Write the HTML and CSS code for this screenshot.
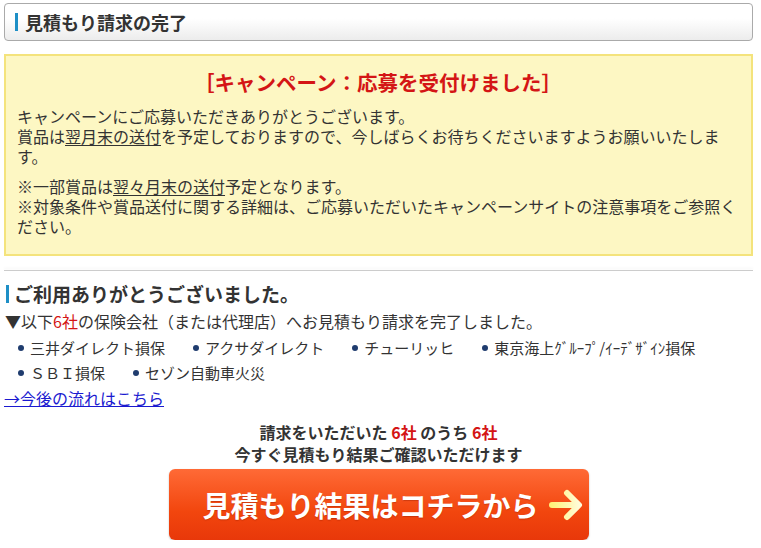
FILE: index.html
```html
<!DOCTYPE html>
<html lang="ja">
<head>
    <meta charset="UTF-8">
    <meta name="viewport" content="width=device-width, initial-scale=1.0">
    <title>見積もり請求の完了</title>
    <link rel="stylesheet" href="styles.css">
</head>
<body>
    <div class="wrap">
        <h1 class="page-title">見積もり請求の完了</h1>

        <div class="campaign">
            <h2 class="campaign-title">［キャンペーン：応募を受付けました］</h2>
            <p>キャンペーンにご応募いただきありがとうございます。<br>賞品は<u>翌月末の送付</u>を予定しておりますので、今しばらくお待ちくださいますようお願いいたします。</p>
            <p>※一部賞品は<u>翌々月末の送付</u>予定となります。<br>※対象条件や賞品送付に関する詳細は、ご応募いただいたキャンペーンサイトの注意事項をご参照ください。</p>
        </div>

        <div class="divider"></div>

        <h2 class="thanks">ご利用ありがとうございました。</h2>
        <p class="lead">▼以下<span class="red">6社</span>の保険会社（または代理店）へお見積もり請求を完了しました。</p>
        <ul class="companies">
            <li>三井ダイレクト損保</li>
            <li>アクサダイレクト</li>
            <li>チューリッヒ</li>
            <li>東京海上ｸﾞﾙｰﾌﾟ/ｲｰﾃﾞｻﾞｲﾝ損保</li>
            <li>ＳＢＩ損保</li>
            <li>セゾン自動車火災</li>
        </ul>
        <a class="flow-link" href="#">→今後の流れはこちら</a>

        <div class="result">
            <p class="result-note">請求をいただいた <span class="red">6社</span> のうち <span class="red">6社</span><br>今すぐ見積もり結果ご確認いただけます</p>
            <a class="result-btn" href="#">
                <span>見積もり結果はコチラから</span>
                <svg class="arrow" width="36" height="34" viewBox="0 0 36 34">
                    <defs>
                        <linearGradient id="ag" x1="0" y1="0" x2="1" y2="0">
                            <stop offset="0" stop-color="#fff27a"/>
                            <stop offset="1" stop-color="#fffbd8"/>
                        </linearGradient>
                    </defs>
                    <path d="M3 17 H29 M18 5 L30 17 L18 29" fill="none" stroke="url(#ag)" stroke-width="6" stroke-linecap="round" stroke-linejoin="round"/>
                </svg>
            </a>
        </div>
    </div>
</body>
</html>
```

FILE: styles.css
```css
body {
    margin: 0;
    font-family: "Noto Sans CJK JP", "Noto Sans", sans-serif;
    color: #333;
    background: #fff;
}
.wrap {
    padding: 3px 8px 0 4px;
}
.page-title {
    margin: 0;
    height: 36px;
    display: flex;
    align-items: center;
    padding-left: 10px;
    border: 1px solid #aaa;
    border-radius: 4px;
    background: linear-gradient(#ffffff 40%, #ececec);
    font-size: 18px;
    font-weight: bold;
    color: #333;
}
.page-title::before {
    content: "";
    width: 3px;
    height: 18px;
    background: #1e8fc6;
    margin-right: 7px;
}
.campaign {
    margin-top: 13px;
    border: 2px solid #f4e37c;
    background: #fdf7c3;
    padding: 12px 12px 18px 11px;
}
.campaign-title {
    margin: 0 0 10px;
    text-align: center;
    color: #d41515;
    font-size: 20.5px;
    font-weight: bold;
    line-height: 28px;
}
.campaign p {
    margin: 0 0 10px;
    font-size: 16px;
    line-height: 20px;
}
.campaign p:last-child {
    margin-bottom: 0;
}
.campaign u {
    text-underline-offset: 2px;
}
.divider {
    margin-top: 14px;
    border-top: 1px solid #ccc;
    box-shadow: 0 -2px 3px #f0f0f0;
}
.thanks {
    margin: 14px 0 0 2px;
    padding-left: 5px;
    border-left: 3px solid #1e8fc6;
    font-size: 19px;
    font-weight: bold;
    line-height: 18px;
}
.lead {
    margin: 6px 0 0 1px;
    font-size: 16px;
    line-height: 24px;
}
.red {
    color: #d41515;
}
.companies {
    list-style: none;
    margin: 2px 0 0;
    padding: 0 0 0 14px;
    display: flex;
    flex-wrap: wrap;
    font-size: 15px;
    line-height: 25px;
}
.companies li {
    margin-right: 28px;
    display: flex;
    align-items: center;
}
.companies li::before {
    content: "";
    width: 6px;
    height: 6px;
    border-radius: 50%;
    background: #1f3c6e;
    margin-right: 6px;
}
.flow-link {
    display: inline-block;
    margin-top: 1px;
    font-size: 16px;
    line-height: 24px;
    color: #1a1ad0;
}
.result {
    margin-top: 11px;
    text-align: center;
}
.result-note {
    margin: 0;
    font-size: 16px;
    font-weight: bold;
    line-height: 22px;
}
.result-btn {
    margin: 4px auto 0;
    width: 420px;
    height: 71px;
    box-sizing: border-box;
    display: flex;
    align-items: center;
    justify-content: center;
    gap: 10px;
    padding-left: 30px;
    border-radius: 6px;
    background: linear-gradient(#ff6a36, #f2460e 60%, #e8380a);
    box-shadow: 0 1px 2px rgba(0, 0, 0, 0.25);
    color: #fff;
    font-size: 28px;
    font-weight: bold;
    text-decoration: none;
    text-shadow: 0 1px 1px rgba(150, 30, 0, 0.4);
}
```
